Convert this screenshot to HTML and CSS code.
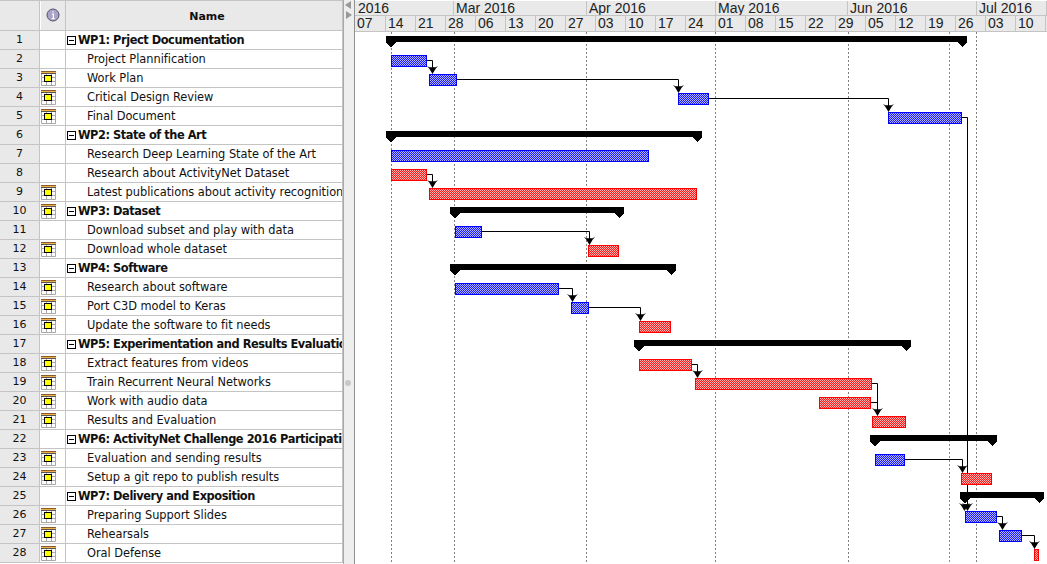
FILE: index.html
```html
<!doctype html>
<html lang="en">
<head>
  <meta charset="utf-8">
  <title>Project Gantt Chart</title>
  <link rel="stylesheet" href="styles.css">
</head>
<body>
  <svg class="defs" width="0" height="0" aria-hidden="true">
    <defs>
      <symbol id="cal" viewBox="0 0 15 15">
        <rect width="15" height="15" fill="#fff"/>
        <path d="M.5 3V14.5H14.5V3M5.5 3V14.5M10.5 3V14.5M.5 6.5H14.5M.5 10.5H14.5" fill="none" stroke="#a8a8a8"/>
        <rect width="15" height="1" fill="#8a5a30"/>
        <rect y="1" width="15" height="1" fill="#f4b040"/>
        <rect y="2" width="15" height="1" fill="#555"/>
        <rect x="3.5" y="4.5" width="7" height="6" fill="#ffff00" stroke="#000"/>
      </symbol>
      <symbol id="arrow" viewBox="0 0 11 8" overflow="visible">
        <path d="M0 0L2.5 1.2H8.5L11 0L8.8 2.6L5.5 8L2.2 2.6Z" fill="#000"/>
      </symbol>
    </defs>
  </svg>

  <div class="app">
    <section class="table">
      <div class="row head">
        <div class="num"></div>
        <div class="ico">
          <svg class="info" width="14" height="14" viewBox="0 0 14 14">
            <circle cx="7" cy="7" r="6" fill="#a9a3c6" stroke="#55506e"/>
            <path d="M7 3.2v1.4M5.8 6H7.4V10M5.6 10.6H8.6" fill="none" stroke="#fff" stroke-width="1.2"/>
          </svg>
        </div>
        <div class="name">Name</div>
      </div>

      <div class="row group"><div class="num">1</div><div class="ico"></div><div class="name"><i class="minus"></i>WP1: Prject Documentation</div></div>
      <div class="row"><div class="num">2</div><div class="ico"></div><div class="name">Project Plannification</div></div>
      <div class="row"><div class="num">3</div><div class="ico"><svg class="cal"><use href="#cal"/></svg></div><div class="name">Work Plan</div></div>
      <div class="row"><div class="num">4</div><div class="ico"><svg class="cal"><use href="#cal"/></svg></div><div class="name">Critical Design Review</div></div>
      <div class="row"><div class="num">5</div><div class="ico"><svg class="cal"><use href="#cal"/></svg></div><div class="name">Final Document</div></div>
      <div class="row group"><div class="num">6</div><div class="ico"></div><div class="name"><i class="minus"></i>WP2: State of the Art</div></div>
      <div class="row"><div class="num">7</div><div class="ico"></div><div class="name">Research Deep Learning State of the Art</div></div>
      <div class="row"><div class="num">8</div><div class="ico"></div><div class="name">Research about ActivityNet Dataset</div></div>
      <div class="row"><div class="num">9</div><div class="ico"><svg class="cal"><use href="#cal"/></svg></div><div class="name">Latest publications about activity recognition</div></div>
      <div class="row group"><div class="num">10</div><div class="ico"><svg class="cal"><use href="#cal"/></svg></div><div class="name"><i class="minus"></i>WP3: Dataset</div></div>
      <div class="row"><div class="num">11</div><div class="ico"></div><div class="name">Download subset and play with data</div></div>
      <div class="row"><div class="num">12</div><div class="ico"><svg class="cal"><use href="#cal"/></svg></div><div class="name">Download whole dataset</div></div>
      <div class="row group"><div class="num">13</div><div class="ico"></div><div class="name"><i class="minus"></i>WP4: Software</div></div>
      <div class="row"><div class="num">14</div><div class="ico"><svg class="cal"><use href="#cal"/></svg></div><div class="name">Research about software</div></div>
      <div class="row"><div class="num">15</div><div class="ico"><svg class="cal"><use href="#cal"/></svg></div><div class="name">Port C3D model to Keras</div></div>
      <div class="row"><div class="num">16</div><div class="ico"><svg class="cal"><use href="#cal"/></svg></div><div class="name">Update the software to fit needs</div></div>
      <div class="row group"><div class="num">17</div><div class="ico"></div><div class="name"><i class="minus"></i>WP5: Experimentation and Results Evaluation</div></div>
      <div class="row"><div class="num">18</div><div class="ico"><svg class="cal"><use href="#cal"/></svg></div><div class="name">Extract features from videos</div></div>
      <div class="row"><div class="num">19</div><div class="ico"><svg class="cal"><use href="#cal"/></svg></div><div class="name">Train Recurrent Neural Networks</div></div>
      <div class="row"><div class="num">20</div><div class="ico"><svg class="cal"><use href="#cal"/></svg></div><div class="name">Work with audio data</div></div>
      <div class="row"><div class="num">21</div><div class="ico"><svg class="cal"><use href="#cal"/></svg></div><div class="name">Results and Evaluation</div></div>
      <div class="row group"><div class="num">22</div><div class="ico"></div><div class="name"><i class="minus"></i>WP6: ActivityNet Challenge 2016 Participation</div></div>
      <div class="row"><div class="num">23</div><div class="ico"><svg class="cal"><use href="#cal"/></svg></div><div class="name">Evaluation and sending results</div></div>
      <div class="row"><div class="num">24</div><div class="ico"><svg class="cal"><use href="#cal"/></svg></div><div class="name">Setup a git repo to publish results</div></div>
      <div class="row group"><div class="num">25</div><div class="ico"></div><div class="name"><i class="minus"></i>WP7: Delivery and Exposition</div></div>
      <div class="row"><div class="num">26</div><div class="ico"><svg class="cal"><use href="#cal"/></svg></div><div class="name">Preparing Support Slides</div></div>
      <div class="row"><div class="num">27</div><div class="ico"><svg class="cal"><use href="#cal"/></svg></div><div class="name">Rehearsals</div></div>
      <div class="row"><div class="num">28</div><div class="ico"><svg class="cal"><use href="#cal"/></svg></div><div class="name">Oral Defense</div></div>
    </section>

    <div class="splitter">
      <span class="tri tri-left"></span>
      <span class="tri tri-right"></span>
      <span class="grip"></span>
    </div>

    <section class="chart">
      <div class="months">
        <div>2016</div><div>Mar 2016</div><div>Apr 2016</div><div>May 2016</div><div>Jun 2016</div><div>Jul 2016</div>
      </div>
      <div class="weeks">
        <div>07</div><div>14</div><div>21</div><div>28</div><div>06</div><div>13</div><div>20</div><div>27</div>
        <div>03</div><div>10</div><div>17</div><div>24</div><div>01</div><div>08</div><div>15</div><div>22</div>
        <div>29</div><div>05</div><div>12</div><div>19</div><div>26</div><div>03</div><div>10</div>
      </div>

      <!-- viewBox uses page coordinates so bars read off the screenshot directly -->
      <svg class="plot" width="692" height="533" viewBox="355 31 692 533">
        <defs>
          <pattern id="hatchBlue" width="2" height="2" patternUnits="userSpaceOnUse">
            <path d="M0 0H2V2H0Z" fill="#b4b4ff"/>
            <path d="M0 0H1V1H0ZM1 1H2V2H1Z" fill="#1a1aff"/>
          </pattern>
          <pattern id="hatchRed" width="2" height="2" patternUnits="userSpaceOnUse">
            <path d="M0 0H2V2H0Z" fill="#ffb4b4"/>
            <path d="M0 0H1V1H0ZM1 1H2V2H1Z" fill="#ff1a1a"/>
          </pattern>
        </defs>

        <!-- month lines and today -->
        <g stroke="#808080" stroke-dasharray="2 2">
          <path d="M391.5 31V564M454.5 31V564M586.5 31V564M715.5 31V564M848.5 31V564M976.5 31V564"/>
        </g>
        <path d="M949.5 31V564" stroke="#33cc33" stroke-dasharray="2 2"/>

        <!-- work package summaries -->
        <g fill="#000" shape-rendering="crispEdges">
          <path d="M386 35H967V42L962 46L957 41H396L391 46L386 42Z"/>
          <path d="M386 130H702V137L697 141L692 136H396L391 141L386 137Z"/>
          <path d="M450 206H624V213L619 217L614 212H460L455 217L450 213Z"/>
          <path d="M450 263H676V270L671 274L666 269H460L455 274L450 270Z"/>
          <path d="M634 339H911V346L906 350L901 345H644L639 350L634 346Z"/>
          <path d="M870 434H997V441L992 445L987 440H880L875 445L870 441Z"/>
          <path d="M960 491H1044V498L1039 502L1034 497H970L965 502L960 498Z"/>
        </g>

        <!-- links -->
        <g fill="none" stroke="#000">
          <path d="M427 59.5H432.5V70"/>
          <path d="M457 78.5H678.5V89"/>
          <path d="M709 97.5H888.5V108"/>
          <path d="M962 116.5H967.5V505"/>
          <path d="M427 173.5H432.5V184"/>
          <path d="M482 230.5H589.5V241"/>
          <path d="M559 287.5H572.5V298"/>
          <path d="M589 306.5H640.5V317"/>
          <path d="M692 363.5H697.5V374"/>
          <path d="M872 382.5H877.5V412"/>
          <path d="M871 401.5H877.5"/>
          <path d="M905 458.5H962.5V469"/>
          <path d="M997 515.5H1002.5V526"/>
          <path d="M1022 534.5H1034.5V545"/>
        </g>
        <g>
          <use href="#arrow" x="427" y="65" width="11" height="8"/>
          <use href="#arrow" x="673" y="84" width="11" height="8"/>
          <use href="#arrow" x="883" y="103" width="11" height="8"/>
          <use href="#arrow" x="427" y="179" width="11" height="8"/>
          <use href="#arrow" x="584" y="236" width="11" height="8"/>
          <use href="#arrow" x="567" y="293" width="11" height="8"/>
          <use href="#arrow" x="635" y="312" width="11" height="8"/>
          <use href="#arrow" x="692" y="369" width="11" height="8"/>
          <use href="#arrow" x="872" y="407" width="11" height="8"/>
          <use href="#arrow" x="957" y="464" width="11" height="8"/>
          <use href="#arrow" x="959" y="502" width="11" height="8"/>
          <use href="#arrow" x="962" y="502" width="11" height="8"/>
          <use href="#arrow" x="997" y="521" width="11" height="8"/>
          <use href="#arrow" x="1029" y="540" width="11" height="8"/>
        </g>

        <!-- tasks -->
        <g fill="url(#hatchBlue)" stroke="#00f">
          <rect x="391.5" y="54.5" width="35" height="11"/>
          <rect x="429.5" y="73.5" width="27" height="11"/>
          <rect x="678.5" y="92.5" width="30" height="11"/>
          <rect x="888.5" y="111.5" width="73" height="11"/>
          <rect x="391.5" y="149.5" width="257" height="11"/>
          <rect x="455.5" y="225.5" width="26" height="11"/>
          <rect x="455.5" y="282.5" width="103" height="11"/>
          <rect x="571.5" y="301.5" width="17" height="11"/>
          <rect x="875.5" y="453.5" width="29" height="11"/>
          <rect x="965.5" y="510.5" width="31" height="11"/>
          <rect x="999.5" y="529.5" width="22" height="11"/>
        </g>
        <g fill="url(#hatchRed)" stroke="#f00">
          <rect x="391.5" y="168.5" width="35" height="11"/>
          <rect x="429.5" y="187.5" width="267" height="11"/>
          <rect x="588.5" y="244.5" width="30" height="11"/>
          <rect x="639.5" y="320.5" width="31" height="11"/>
          <rect x="639.5" y="358.5" width="52" height="11"/>
          <rect x="695.5" y="377.5" width="176" height="11"/>
          <rect x="819.5" y="396.5" width="51" height="11"/>
          <rect x="872.5" y="415.5" width="33" height="11"/>
          <rect x="961.5" y="472.5" width="30" height="11"/>
          <rect x="1034.5" y="548.5" width="4" height="11"/>
        </g>
      </svg>
    </section>
  </div>
</body>
</html>
```

FILE: styles.css
```css
:root {
  --panel: #e9e9e9;
  --line: #c4c4c4;
  --ink: #111;
}
html, body { margin: 0; padding: 0; background: #fff; color: var(--ink); }
body { width: 1047px; height: 564px; overflow: hidden; }
.defs { display: block; }

.app { display: flex; height: 564px; overflow: hidden; }

/* task table */
.table {
  width: 343px;
  flex: none;
  font: 11.4px/18px "DejaVu Sans", sans-serif;
  letter-spacing: -.03px;
}
.row {
  display: flex;
  height: 19px;
  box-sizing: border-box;
  border-bottom: 1px solid var(--line);
  border-right: 1px solid var(--line);
}
.num {
  width: 40px;
  flex: none;
  box-sizing: border-box;
  background: var(--panel);
  border-right: 1px solid var(--line);
  text-align: center;
  font-size: 11px;
}
.ico {
  width: 26px;
  flex: none;
  box-sizing: border-box;
  border-right: 1px solid var(--line);
  padding: 2px 0 0 1px;
}
.name {
  flex: 1;
  min-width: 0;
  padding-left: 21px;
  white-space: nowrap;
  overflow: hidden;
}
.cal { display: block; width: 15px; height: 15px; }

.row.head {
  height: 31px;
  background: var(--panel);
  border-top: 1px solid var(--line);
}
.head .ico { background: var(--panel); padding: 7px 0 0 5px; border-left: 1px solid #fff; }
.head .name { padding: 7px 0 0 6px; text-align: center; font-size: 11px; font-weight: bold; }
.info { display: block; }

.group .name {
  padding-left: 1px;
  font-size: 11.4px;
  font-weight: bold;
  letter-spacing: -.45px;
  display: flex;
  align-items: center;
}
.minus {
  position: relative;
  width: 9px;
  height: 9px;
  flex: none;
  margin-right: 2px;
  box-sizing: border-box;
  border: 1px solid #000;
}
.minus::after {
  content: "";
  position: absolute;
  left: 1px;
  right: 1px;
  top: 3px;
  height: 1px;
  background: #000;
}

/* divider between table and chart */
.splitter {
  position: relative;
  width: 12px;
  flex: none;
  box-sizing: border-box;
  background: #eee;
  border-left: 1px solid #a8a8a8;
  border-right: 1px solid #909090;
}
.tri {
  position: absolute;
  left: 1px;
  width: 0;
  height: 0;
  border-top: 4px solid transparent;
  border-bottom: 4px solid transparent;
}
.tri-left { top: 1px; border-right: 6px solid #999; }
.tri-right { top: 11px; left: 2px; border-left: 6px solid #999; }
.grip {
  position: absolute;
  left: 1px;
  top: 380px;
  width: 6px;
  height: 6px;
  border-radius: 50%;
  background: #c8c8c8;
}

/* timeline */
.chart { flex: 1; min-width: 0; overflow: hidden; font: 14px/15px "Liberation Sans", sans-serif; }
.months, .weeks {
  display: grid;
  height: 15px;
  background: var(--panel);
  border-bottom: 1px solid var(--line);
}
.months { grid-template-columns: 99px 133px 129px 132px 129px 1fr; }
.weeks { grid-template-columns: 31px repeat(22, 30px); }
.months { border-top: 1px solid #fff; height: 14px; }
.months div, .weeks div {
  box-sizing: border-box;
  padding-left: 2px;
  border-right: 1px solid var(--line);
  white-space: nowrap;
  overflow: hidden;
  color: #222;
}
.months div:first-child { padding-left: 3px; }
.plot { display: block; }
```
